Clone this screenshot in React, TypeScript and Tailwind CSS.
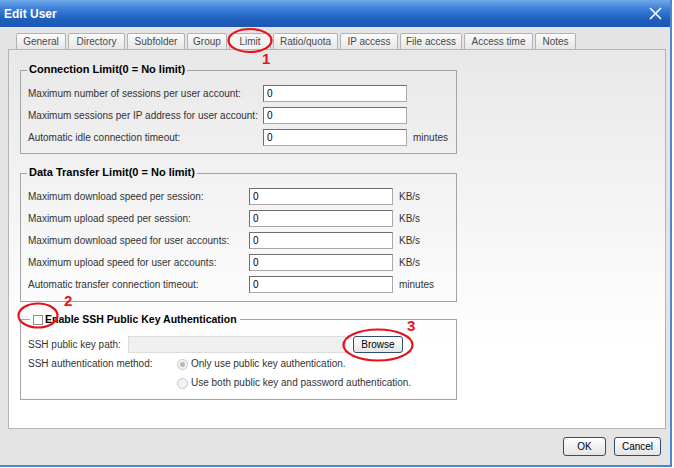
import React from 'react';

const tabs: { label: string; w: string; active?: boolean }[] = [
  { label: 'General', w: 'w-[50px]' },
  { label: 'Directory', w: 'w-[57px]' },
  { label: 'Subfolder', w: 'w-[58px]' },
  { label: 'Group', w: 'w-[40px]' },
  { label: 'Limit', w: 'w-[42px]', active: true },
  { label: 'Ratio/quota', w: 'w-[65px]' },
  { label: 'IP access', w: 'w-[58px]' },
  { label: 'File access', w: 'w-[62px]' },
  { label: 'Access time', w: 'w-[69px]' },
  { label: 'Notes', w: 'w-[41px]' },
];

function Field({ label, labelW, unit }: { label: string; labelW: string; unit?: string }) {
  return (
    <div className="flex items-center h-[17px]">
      <span className={`${labelW} shrink-0 whitespace-nowrap text-[#333]`}>{label}</span>
      <input
        readOnly
        value="0"
        className="w-[144px] h-[17px] bg-white border border-[#a9a9a9] border-t-[#6e6e6e] border-l-[#6e6e6e] px-[3px] text-[10px] text-black outline-none"
      />
      {unit && <span className="ml-[6px] text-[#333]">{unit}</span>}
    </div>
  );
}

function Radio({ checked, label }: { checked?: boolean; label: string }) {
  return (
    <div className="flex items-center h-[16px]">
      <span className="w-[11px] h-[11px] rounded-full border border-[#c8c8c8] bg-[#f2f2f2] flex items-center justify-center">
        {checked && <span className="w-[5px] h-[5px] rounded-full bg-[#b8b8b8]" />}
      </span>
      <span className="ml-[3px] whitespace-nowrap text-[#333]">{label}</span>
    </div>
  );
}

export default function App() {
  return (
    <div className="relative w-[674px] h-[468px] bg-white text-[10px] leading-none font-['Liberation_Sans',Arial,sans-serif]">
      <div className="w-[672px] h-[467px] flex flex-col bg-[#e4e4e4] border-r-2 border-b-2 border-[#4a89d0]">
        {/* Title bar */}
        <div className="h-[27px] shrink-0 flex items-center justify-between pl-[4px] pr-[8px] bg-[linear-gradient(#6ea9ea,#3a7dd6_35%,#1f60bd_70%,#1a57b2)]">
          <span className="text-white font-bold text-[12px]">Edit User</span>
          <svg width="13" height="13" viewBox="0 0 13 13">
            <path d="M1 1L12 12M12 1L1 12" stroke="white" strokeWidth="1.6" />
          </svg>
        </div>

        {/* Tabs */}
        <div className="flex gap-[2px] pl-[16px] pt-[5px] h-[22px] shrink-0 items-end">
          {tabs.map(t => (
            <div
              key={t.label}
              className={`${t.w} h-[17px] -mb-px flex items-center justify-center rounded-t-[2px] border border-[#b2b2b2] text-[#4a4a4a] ${
                t.active ? 'bg-[#f4f4f4] border-b-[#f4f4f4]' : 'bg-[linear-gradient(#fbfbfb,#e6e6e6)]'
              }`}
            >
              {t.label}
            </div>
          ))}
        </div>

        {/* Panel */}
        <div className="ml-[8px] w-[658px] h-[380px] shrink-0 border border-[#b4b4b4] bg-[linear-gradient(#e8e8e8,#ffffff_78%)] pl-[11px] pt-[14px]">
          <fieldset className="min-w-0 w-[437px] border border-[#a4a4a4] px-[7px] pb-[7px]">
            <legend className="-ml-[1px] px-[2px] text-[11px] font-bold text-black h-[13px]">Connection Limit(0 = No limit)</legend>
            <div className="mt-[8px] flex flex-col gap-[5px]">
              <Field label="Maximum number of sessions per user account:" labelW="w-[235px]" />
              <Field label="Maximum sessions per IP address for user account:" labelW="w-[235px]" />
              <Field label="Automatic idle connection timeout:" labelW="w-[235px]" unit="minutes" />
            </div>
          </fieldset>

          <fieldset className="min-w-0 mt-[13px] w-[437px] border border-[#a4a4a4] px-[7px] pb-[8px]">
            <legend className="-ml-[1px] px-[2px] text-[11px] font-bold text-black h-[13px]">Data Transfer Limit(0 = No limit)</legend>
            <div className="mt-[8px] flex flex-col gap-[5px]">
              <Field label="Maximum download speed per session:" labelW="w-[221px]" unit="KB/s" />
              <Field label="Maximum upload speed per session:" labelW="w-[221px]" unit="KB/s" />
              <Field label="Maximum download speed for user accounts:" labelW="w-[221px]" unit="KB/s" />
              <Field label="Maximum upload speed for user accounts:" labelW="w-[221px]" unit="KB/s" />
              <Field label="Automatic transfer connection timeout:" labelW="w-[221px]" unit="minutes" />
            </div>
          </fieldset>

          <fieldset className="min-w-0 mt-[11px] w-[437px] border border-[#a4a4a4] px-[7px] pb-[8px]">
            <legend className="ml-[2px] pl-[3px] pr-[3px] h-[13px] flex items-center">
              <span className="w-[10px] h-[10px] border border-[#8e8e8e] bg-white" />
              <span className="ml-[2px] text-[10.5px] font-bold text-black">Enable SSH Public Key Authentication</span>
            </legend>
            <div className="mt-[10px] flex items-center h-[17px]">
              <span className="w-[100px] shrink-0 whitespace-nowrap text-[#333]">SSH public key path:</span>
              <div className="w-[218px] h-[17px] bg-[#f0f0f0] border border-[#dcdcdc]" />
              <button className="ml-[7px] w-[50px] h-[17px] rounded-[3px] border border-[#2f4e6e] bg-[linear-gradient(#ffffff,#e6e6e6)] text-black text-[10px] leading-none">
                Browse
              </button>
            </div>
            <div className="mt-[3px] flex">
              <span className="w-[149px] shrink-0 h-[16px] flex items-center whitespace-nowrap text-[#333]">SSH authentication method:</span>
              <div className="flex flex-col gap-[3px]">
                <Radio checked label="Only use public key authentication." />
                <Radio label="Use both public key and password authentication." />
              </div>
            </div>
          </fieldset>
        </div>

        {/* Footer */}
        <div className="flex justify-end gap-[8px] pr-[9px] pt-[8px]">
          <button className="w-[43px] h-[19px] rounded-[3px] border border-[#2f4e6e] bg-[linear-gradient(#ffffff,#e4e4e4)] text-black text-[10px]">OK</button>
          <button className="w-[47px] h-[19px] rounded-[3px] border border-[#2f4e6e] bg-[linear-gradient(#ffffff,#e4e4e4)] text-black text-[10px]">Cancel</button>
        </div>
      </div>

      {/* Red annotations */}
      <svg className="absolute inset-0 pointer-events-none" width="674" height="468" viewBox="0 0 674 468">
        <ellipse cx="250" cy="40.5" rx="21.5" ry="11.5" fill="none" stroke="#e5141c" strokeWidth="2.2" />
        <ellipse cx="38" cy="315.5" rx="19.5" ry="12" fill="none" stroke="#e5141c" strokeWidth="2.2" />
        <ellipse cx="378" cy="345" rx="34.5" ry="15.5" fill="none" stroke="#e5141c" strokeWidth="2.2" />
      </svg>
      <span className="absolute left-[262px] top-[51px] text-[15px] leading-none font-bold text-[#e5141c] font-['Liberation_Sans',sans-serif]">1</span>
      <span className="absolute left-[64px] top-[293px] text-[15px] leading-none font-bold text-[#e5141c] font-['Liberation_Sans',sans-serif]">2</span>
      <span className="absolute left-[407px] top-[318px] text-[15px] leading-none font-bold text-[#e5141c] font-['Liberation_Sans',sans-serif]">3</span>
    </div>
  );
}
